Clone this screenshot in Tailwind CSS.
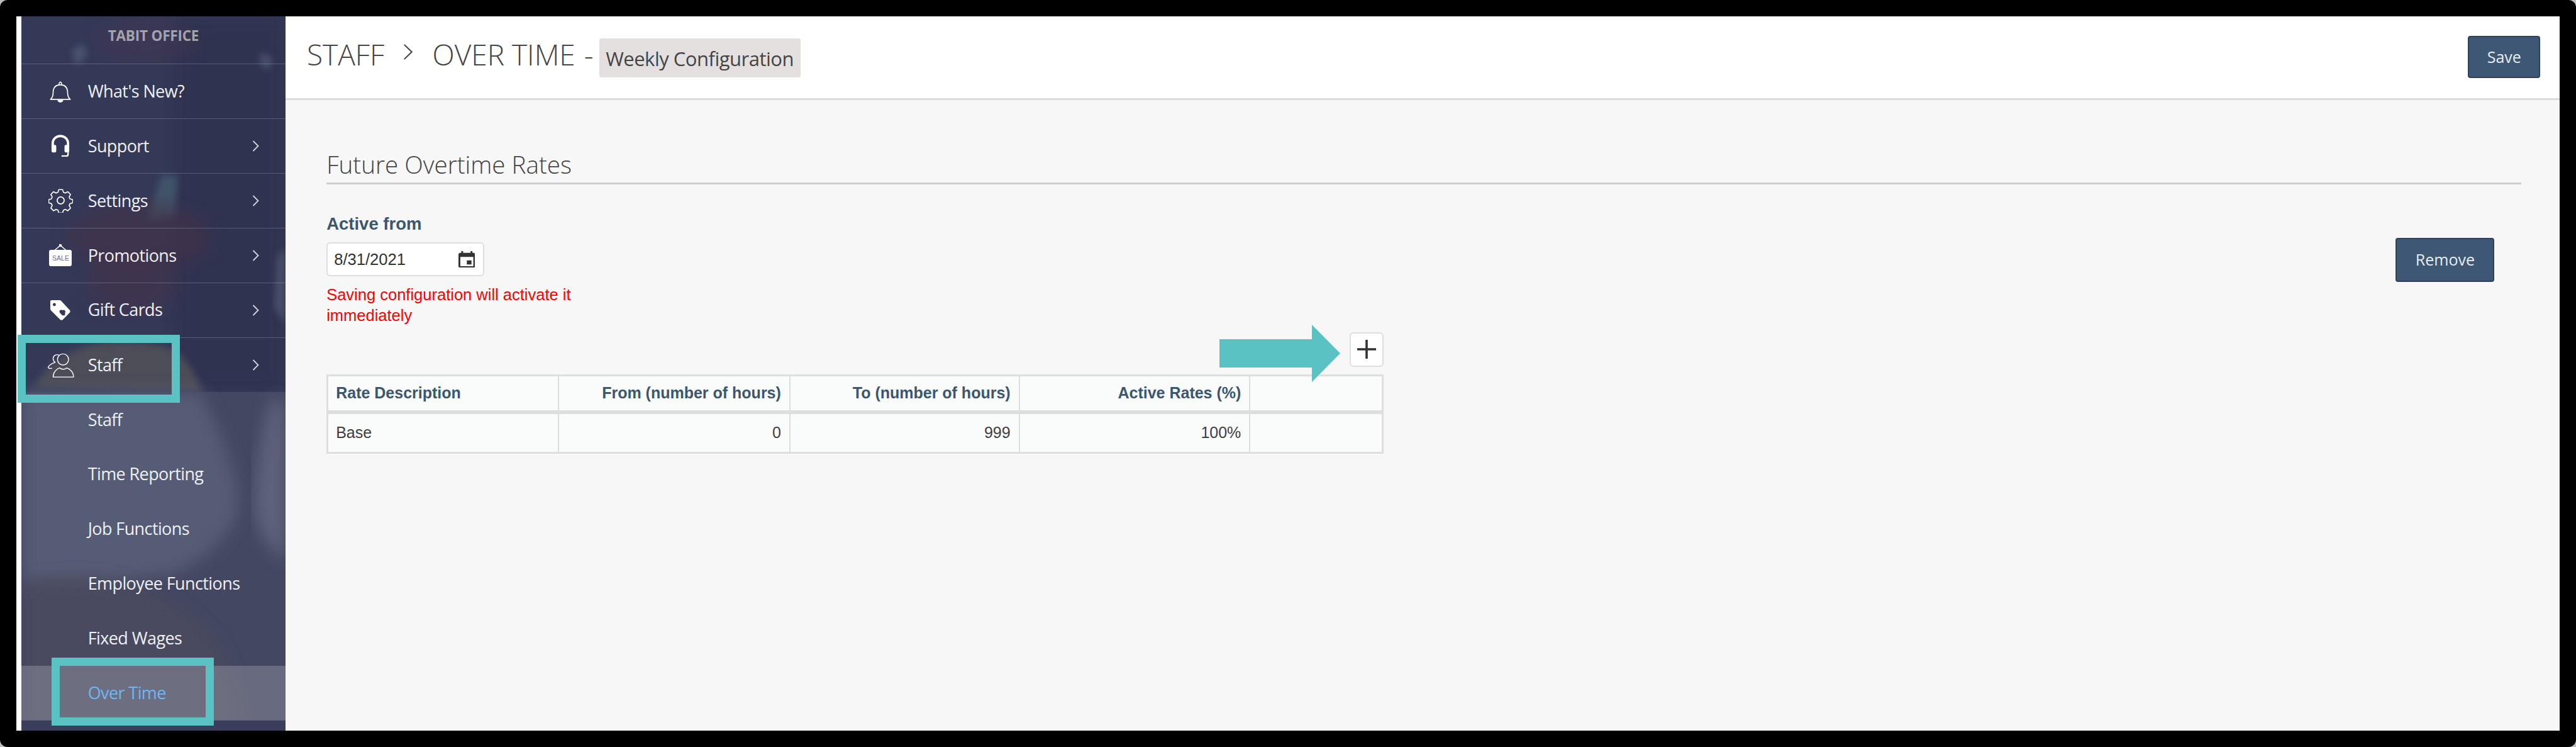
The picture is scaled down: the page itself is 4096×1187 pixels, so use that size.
<!DOCTYPE html>
<html lang="en">
<head>
<meta charset="UTF-8">
<title>Over Time - Weekly Configuration</title>
<script src="https://cdn.jsdelivr.net/npm/@tailwindcss/browser@4"></script>
</head>
<body class="bg-[#bdbdbd] overflow-hidden">
<div class="relative w-[4096px] h-[1187px] bg-black rounded-[12px] p-[25.7px] flex font-['Open_Sans',sans-serif]">

  <div class="w-[8.3px] bg-white shrink-0"></div>

  <!-- sidebar -->
  <aside class="relative w-[420px] shrink-0 bg-[#343958] overflow-hidden text-[#eef0f5] text-[27px] tracking-[-0.6px]">
    <svg class="absolute inset-0 w-full h-full" viewBox="37 28 457 1235" preserveAspectRatio="none">
      <defs>
        <filter id="b1"><feGaussianBlur stdDeviation="6"/></filter>
        <filter id="b2"><feGaussianBlur stdDeviation="14"/></filter>
      </defs>
      <rect x="300" y="28" width="194" height="650" fill="#2f3350" opacity=".8" filter="url(#b2)"/>
      <ellipse cx="250" cy="70" rx="90" ry="40" fill="#47354f" opacity=".4" filter="url(#b2)"/>
      <path d="M125 85l20-10 5 25-20 12z M452 90l20 10-8 22-14-12z" fill="#5d6883" opacity=".55" filter="url(#b1)"/>
      <path d="M255 380l25-78 28 2-6 70z" fill="#4b6b78" opacity=".55" filter="url(#b1)"/>
      <ellipse cx="240" cy="410" rx="125" ry="60" fill="#453048" opacity=".6" filter="url(#b2)"/>
      <ellipse cx="225" cy="490" rx="80" ry="55" fill="#46334a" opacity=".5" filter="url(#b2)"/>
      <path d="M480 440l14-10v130l-20-30z" fill="#5a6178" opacity=".6" filter="url(#b1)"/>
      <path d="M60 670c30-70 130-95 230-70 30 10 50 50 60 78z" fill="#4e4d58" filter="url(#b1)"/>
      <rect x="37" y="677" width="457" height="586" fill="#434761"/>
      <path d="M37 677h310c30 60 60 130 65 180 5 60-50 100-100 130-80 20-200 30-275 20z" fill="#575b74" filter="url(#b2)"/>
      <path d="M37 1010c120-40 260 10 330 90 30 40 50 100 55 163H37z" fill="#4c4b5e" opacity=".8" filter="url(#b2)"/>
      <path d="M470 690c-20 60-30 140-30 190 10 50 30 70 54 90V690z" fill="#5e627a" filter="url(#b2)"/>
      <rect x="37" y="1244" width="457" height="19" fill="#3a3e5a"/>
    </svg>

    <div class="relative flex flex-col">
      <div class="h-[76.7px] flex justify-center items-center pb-[14px] text-[22.5px] tracking-[-0.2px] font-bold text-[#a3a3ac] border-b border-white/20">TABIT OFFICE</div>

      <a class="h-[86.85px] flex items-center border-b border-white/20">
        <span class="w-[105.7px] pl-[19.3px] flex justify-center">
          <svg class="w-[34px] h-[35px]" viewBox="0 0 36 38" fill="none" stroke="#fff" stroke-width="1.8" stroke-linejoin="round"><path d="M1 32.5c3.5-3 4.5-6 4.5-11.5 0-8 4-13.5 12.5-13.5S30.500 13 30.500 21c0 5.500 1 8.500 4.500 11.500z"/><path d="M15.500 7.500c0-3 1.500-5 2.500-5s2.500 2 2.500 5"/><path d="M14 34.500c1 2 2.500 2.500 4 2.500s3-.5 4-2.500z" fill="#fff"/></svg>
        </span>
        <span>What's New?</span>
      </a>
      <a class="h-[86.85px] flex items-center border-b border-white/20">
        <span class="w-[105.7px] pl-[19.3px] flex justify-center">
          <svg class="w-[30px] h-[36px]" viewBox="0 0 32 38" fill="none" stroke="#fff"><path d="M3 21v-6C3 7 9 2 16 2s13 5 13 13v6" stroke-width="4"/><rect x="1" y="17" width="8" height="13" rx="2.500" fill="#fff" stroke="none"/><rect x="23" y="17" width="8" height="13" rx="2.500" fill="#fff" stroke="none"/><path d="M29 28v5c0 2-1 3-3 3h-8" stroke-width="2.500"/></svg>
        </span>
        <span>Support</span>
        <svg class="ml-auto mr-[42px] w-[11px] h-[18px]" viewBox="0 0 11 18" fill="none" stroke="#d4d6df" stroke-width="1.800"><path d="M1.500 1l8 8-8 8"/></svg>
      </a>
      <a class="h-[86.85px] flex items-center border-b border-white/20">
        <span class="w-[105.7px] pl-[19.3px] flex justify-center">
          <svg class="w-[39px] h-[39px]" viewBox="0 0 42 42" fill="none" stroke="#fff" stroke-width="1.900" stroke-linejoin="round"><path d="M17.500 2.500h7l1.500 5 3.500 1.500 4.600-2.500 5 5-2.500 4.600 1.500 3.500 5 1.500v5.800l-5 1.500-1.500 3.500 2.500 4.600-5 5-4.600-2.500-3.500 1.500-1.500 5h-7l-1.500-5-3.500-1.500-4.600 2.500-5-5 2.500-4.600-1.500-3.500-5-1.500v-5.800l5-1.500 1.500-3.500-2.500-4.600 5-5 4.600 2.500 3.500-1.500z" transform="translate(21 21) scale(.93) translate(-21 -22.500)"/><circle cx="21" cy="21" r="6"/></svg>
        </span>
        <span>Settings</span>
        <svg class="ml-auto mr-[42px] w-[11px] h-[18px]" viewBox="0 0 11 18" fill="none" stroke="#d4d6df" stroke-width="1.800"><path d="M1.500 1l8 8-8 8"/></svg>
      </a>
      <a class="h-[86.85px] flex items-center border-b border-white/20">
        <span class="w-[105.7px] pl-[19.3px] flex justify-center">
          <span class="relative w-[36px] h-[35px] flex items-end">
            <svg class="absolute top-0 left-[7px] w-[22px] h-[11px]" viewBox="0 0 22 11" fill="none" stroke="#fff" stroke-width="1.500"><path d="M1 10.500L11 2l10 8.500"/><circle cx="11" cy="2" r="1.500" fill="#fff"/></svg>
            <span class="w-full h-[26px] bg-white rounded-[3px] flex items-center justify-center text-[10.500px] tracking-normal leading-none text-[#6a6d7d] font-['Liberation_Sans',sans-serif]">SALE</span>
          </span>
        </span>
        <span>Promotions</span>
        <svg class="ml-auto mr-[42px] w-[11px] h-[18px]" viewBox="0 0 11 18" fill="none" stroke="#d4d6df" stroke-width="1.800"><path d="M1.500 1l8 8-8 8"/></svg>
      </a>
      <a class="h-[86.85px] flex items-center border-b border-white/20">
        <span class="w-[105.7px] pl-[19.3px] flex justify-center">
          <svg class="w-[32px] h-[32px]" viewBox="0 0 35 35" fill-rule="evenodd"><path fill="#fff" d="M2 0h14c1 0 2 .5 3 1.300L33.500 17c1.500 1.500 1.500 3.500 0 5L22 33.500c-1.500 1.500-3.500 1.500-5 0L1.300 18C.5 17 0 16 0 15V2C0 1 1 0 2 0zm5 5a2.700 2.700 0 1 0 0 5.400A2.700 2.700 0 0 0 7 5zm14 12.500c-1.800-1.800-4.700-.8-5 1.700-.2 1.500.4 2.600 1.300 3.500l3.700 3.800 4.500-.3.300-4.500c.8-1.800.3-3.700-1.200-4.400-1.300-.6-2.600 0-3.600.2z"/></svg>
        </span>
        <span>Gift Cards</span>
        <svg class="ml-auto mr-[42px] w-[11px] h-[18px]" viewBox="0 0 11 18" fill="none" stroke="#d4d6df" stroke-width="1.800"><path d="M1.500 1l8 8-8 8"/></svg>
      </a>
      <a class="h-[86.85px] flex items-center">
        <span class="w-[105.7px] pl-[19.3px] flex justify-center">
          <svg class="w-[43px] h-[39px]" viewBox="0 0 46 42" fill="none" stroke="#fff" stroke-width="1.500" stroke-linejoin="round"><circle cx="27" cy="11" r="9.500"/><path d="M20 3.500c-5-2-10 1-10 6 0 3 1.500 5 3.500 6.500-5 1.500-10 4-12 8.500l2 2 5-.5"/><path d="M10 41c0-8 6-14 11-15.500 4 3 9 3 12 0 6 1.500 12 7 12 15.500z"/></svg>
        </span>
        <span>Staff</span>
        <svg class="ml-auto mr-[42px] w-[11px] h-[18px]" viewBox="0 0 11 18" fill="none" stroke="#d4d6df" stroke-width="1.800"><path d="M1.500 1l8 8-8 8"/></svg>
      </a>
      <a class="h-[86.85px] flex items-center pl-[105.7px]">Staff</a>
      <a class="h-[86.85px] flex items-center pl-[105.7px]">Time Reporting</a>
      <a class="h-[86.85px] flex items-center pl-[105.7px]">Job Functions</a>
      <a class="h-[86.85px] flex items-center pl-[105.7px]">Employee Functions</a>
      <a class="h-[86.85px] flex items-center pl-[105.7px]">Fixed Wages</a>
      <a class="h-[86.85px] flex items-center pl-[105.7px] bg-white/20 text-[#6db6f2]">Over Time</a>
    </div>
  </aside>

  <!-- main -->
  <main class="flex-1 flex flex-col bg-[#f7f7f7] min-w-0">
    <header class="h-[133px] shrink-0 bg-white border-b-[3px] border-[#dcdcdc] flex items-center pl-[34px] pr-[31px] text-[#444]">
      <h1 class="-mt-[10px] flex items-center text-[46px] font-light leading-none">
        <span>STAFF</span>
        <svg class="mx-[30px] -mt-[6px] w-[16.500px] h-[25px]" viewBox="0 0 18 26" fill="none" stroke="#444" stroke-width="2.200" preserveAspectRatio="none"><path d="M2 1l13 12L2 25"/></svg>
        <span>OVER TIME</span>
        <span class="ml-[14px]">-</span>
        <span class="ml-[9px] mt-[13px] pt-[3px] w-[320px] h-[61.6px] bg-[#e5e0e0] rounded-[3px] flex items-center justify-center text-[31px] tracking-[-0.5px] font-normal">Weekly Configuration</span>
      </h1>
      <button class="ml-auto w-[115px] h-[67.5px] rounded-[4px] bg-[#3d5775] border-2 border-[#2f4159] text-[#e8edf2] text-[25px]">Save</button>
    </header>

    <section class="flex-1 pl-[65.2px] pr-[61.6px]">
      <div class="h-[134.500px] flex items-end pb-[10px] border-b-[3px] border-[#cfcfcf] text-[#444] text-[38.600px] font-light leading-none">Future Overtime Rates</div>

      <div class="flex justify-between items-start font-['Liberation_Sans',sans-serif]">
        <div class="w-[400px]">
          <label class="block mt-[45.500px] h-[33px] text-[27.500px] leading-[33px] font-bold text-[#3b566f]">Active from</label>
          <div class="mt-[13.500px] w-[251px] h-[54px] bg-white border-2 border-[#dedede] rounded-[6px] flex items-center justify-between pl-[10px] pr-[13px] text-[25.600px] text-[#333]">
            <span>8/31/2021</span>
            <svg class="w-[26.600px] h-[26.600px]" viewBox="3 1 18 20" preserveAspectRatio="none" fill="#333"><path d="M17 12h-5v5h5v-5zM16 1v2H8V1H6v2H5c-1.110 0-1.990.9-1.990 2L3 19c0 1.100.89 2 2 2h14c1.100 0 2-.9 2-2V5c0-1.100-.9-2-2-2h-1V1h-2zm3 18H5V8h14v11z"/></svg>
          </div>
          <p class="mt-[13px] text-[25.500px] leading-[33px] text-[#ff0000]">Saving configuration will activate it immediately</p>
        </div>
        <button class="mt-[85px] mr-[42.300px] w-[157px] h-[70px] rounded-[4px] bg-[#3d5775] border-2 border-[#2f4159] text-[#e8edf2] text-[25px] font-['Open_Sans',sans-serif]">Remove</button>
      </div>

      <div class="w-[1680.500px] mt-[9.500px] font-['Liberation_Sans',sans-serif]">
        <div class="flex justify-end">
          <button class="w-[53.300px] h-[55px] bg-white border-2 border-[#dedede] rounded-[6px] flex items-center justify-center">
            <svg class="w-[30px] h-[30px]" viewBox="0 0 30 30" fill="none" stroke="#333" stroke-width="3.600"><path d="M15 0v30M0 15h30"/></svg>
          </button>
        </div>
        <table class="mt-[12px] w-full table-fixed border-collapse border-[3px] border-[#dedede] bg-[#fafbfb] text-[25px]">
          <colgroup>
            <col class="w-[367.600px]"><col class="w-[367.600px]"><col class="w-[364.800px]"><col class="w-[366.700px]"><col>
          </colgroup>
          <thead>
            <tr class="h-[59px] border-b-[6px] border-[#dedede] text-[#3b566f] font-bold">
              <th class="border-r-2 border-[#dedede] px-[12px] text-left">Rate Description</th>
              <th class="border-r-2 border-[#dedede] px-[13px] text-right">From (number of hours)</th>
              <th class="border-r-2 border-[#dedede] px-[13px] text-right">To (number of hours)</th>
              <th class="border-r-2 border-[#dedede] px-[13px] text-right">Active Rates (%)</th>
              <th></th>
            </tr>
          </thead>
          <tbody>
            <tr class="h-[64px] text-[#3f3f3f]">
              <td class="border-r-2 border-[#dedede] px-[12px]">Base</td>
              <td class="border-r-2 border-[#dedede] px-[13px] text-right">0</td>
              <td class="border-r-2 border-[#dedede] px-[13px] text-right">999</td>
              <td class="border-r-2 border-[#dedede] px-[13px] text-right">100%</td>
              <td></td>
            </tr>
          </tbody>
        </table>
      </div>
    </section>
  </main>

  <!-- annotations laid over the screenshot -->
  <div class="absolute left-[27.600px] top-[532px] w-[258px] h-[107.500px] border-[13px] border-[#5ac2c3]"></div>
  <div class="absolute left-[81.800px] top-[1045px] w-[258px] h-[108.400px] border-[13px] border-[#5ac2c3]"></div>
  <svg class="absolute left-[1939px] top-[515.600px] w-[192px] h-[91px]" viewBox="0 0 209 99" fill="#5ac2c3"><path d="M0 25h160V0l49 49.500L160 99V74H0z"/></svg>
</div>
</body>
</html>
